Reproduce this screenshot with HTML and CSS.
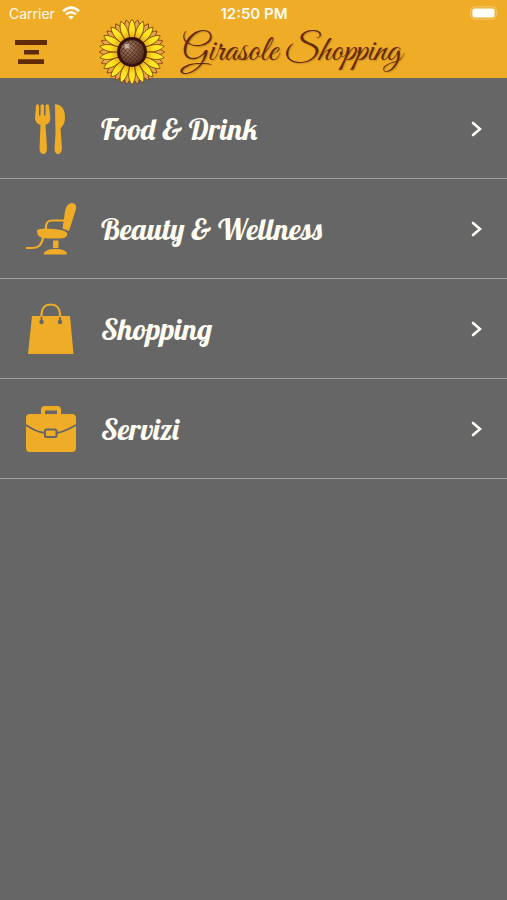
FILE: index.html
```html
<!DOCTYPE html>
<html lang="it">
<head>
    <meta charset="UTF-8">
    <meta name="viewport" content="width=device-width, initial-scale=1.0">
    <title>Girasole Shopping</title>
    <link rel="stylesheet" href="styles.css">
</head>
<body>
    <header class="header">
        <div class="status-bar">
            <div class="carrier">
                <span>Carrier</span>
                <svg class="wifi" viewBox="0 0 18 14" aria-hidden="true">
                    <path d="M1 5.2Q9-2 17 5.2" stroke-width="2.6"/>
                    <path d="M4 8.4Q9 4 14 8.4" stroke-width="2.5"/>
                    <path class="wifi-dot" d="M6.2 10.7Q9 8.6 11.8 10.7L9 13.6Z"/>
                </svg>
            </div>
            <span class="time">12:50 PM</span>
            <svg class="battery" viewBox="0 0 29 14" aria-hidden="true">
                <rect class="battery-shell" x="0.7" y="0.8" width="25.6" height="12.4" rx="3.8"/>
                <rect x="2.4" y="2.6" width="22.2" height="8.8" rx="2"/>
                <path class="battery-tip" d="M27.5 5Q29 7 27.5 9Z"/>
            </svg>
        </div>
        <nav class="navbar">
            <button class="menu-button" type="button" aria-label="Menu">
                <svg viewBox="0 0 32 24" aria-hidden="true">
                    <path d="M0 0h32v5H0zM9 10h15v4.5H9zM3 19.3h26V24H3z"/>
                </svg>
            </button>
            <a class="brand" href="#">
                <svg class="sunflower" viewBox="-32 -32 64 64" aria-hidden="true">
                    <defs>
                        <linearGradient id="petalFill" x1="0" y1="0" x2="0" y2="1">
                            <stop offset="0" stop-color="#fff22c"/>
                            <stop offset="0.55" stop-color="#fbe01f"/>
                            <stop offset="1" stop-color="#e39b10"/>
                        </linearGradient>
                        <radialGradient id="seedFill" cx="0.35" cy="0.3" r="0.75">
                            <stop offset="0" stop-color="#b08a74"/>
                            <stop offset="0.4" stop-color="#8a604a"/>
                            <stop offset="1" stop-color="#5f3626"/>
                        </radialGradient>
                        <pattern id="seeds" width="3" height="3" patternUnits="userSpaceOnUse" patternTransform="rotate(40)">
                            <path d="M0 0H3M0 0V3" stroke="#3a180d" stroke-width="0.8"/>
                        </pattern>
                        <path id="petal" d="M0-31.600C-3.800-27-4.200-20-1.800-12h3.600C4.200-20 3.800-27 0-31.600Z"/>
                        <g id="petals">
                            <use href="#petal"/>
                            <use href="#petal" transform="rotate(20)"/>
                            <use href="#petal" transform="rotate(40)"/>
                            <use href="#petal" transform="rotate(60)"/>
                            <use href="#petal" transform="rotate(80)"/>
                            <use href="#petal" transform="rotate(100)"/>
                            <use href="#petal" transform="rotate(120)"/>
                            <use href="#petal" transform="rotate(140)"/>
                            <use href="#petal" transform="rotate(160)"/>
                        </g>
                    </defs>
                    <g fill="#efa34a" stroke="#7a3f10" stroke-width="0.8">
                        <use href="#petals" transform="rotate(10)"/>
                        <use href="#petals" transform="rotate(190)"/>
                    </g>
                    <g fill="url(#petalFill)" stroke="#7a4508" stroke-width="0.8">
                        <use href="#petals"/>
                        <use href="#petals" transform="rotate(180)"/>
                    </g>
                    <circle r="14.5" fill="#35120b"/>
                    <circle r="11.5" fill="url(#seedFill)"/>
                    <circle r="11.5" fill="url(#seeds)"/>
                    <circle cx="-5" cy="-5.5" r="2.4" fill="#d8c6be" opacity="0.75"/>
                </svg>
                <span class="brand-name">Girasole Shopping</span>
            </a>
        </nav>
    </header>

    <main>
        <ul class="categories">
            <li>
                <a class="category" href="#">
                    <svg class="category-icon" viewBox="0 0 52 52" aria-hidden="true">
                        <path d="M11 2.500Q12.500 0 14 2.500V12.500H15.500V2.500Q17.300 0 19 2.500V12.500H20.500V2.500Q22.300 0 24 2.500L25.400 15Q25.600 20 20.500 22L22 45Q21.800 51 18.300 51T14.500 45L15.500 22Q10 20 10 15Z"/>
                        <path d="M30 1Q40 2 40 15Q40 21 35.500 25.500L37 45Q36.500 51 33 51T29.500 45L30.500 31Z"/>
                    </svg>
                    <span class="category-name">Food &amp; Drink</span>
                    <svg class="chevron" viewBox="0 0 12 16" aria-hidden="true"><path d="M2 2l7 6-7 6"/></svg>
                </a>
            </li>
            <li>
                <a class="category" href="#">
                    <svg class="category-icon" viewBox="0 0 52 52" aria-hidden="true">
                        <path d="M37.500 25.500L40 8Q42 0 47 0Q52 .5 51 6L44 28Z"/>
                        <path d="M12 27Q15 24.500 29 26Q42 27 42.500 31Q42 35.500 34 35.500H23Q12 35 12 29Z"/>
                        <path d="M28 37.500h5.500V45H28zM18.500 51.500Q19 46 30.500 46T42 51.500Z"/>
                        <path class="outline" d="M21 27V24Q21 17.500 27 17.500H39M18 34Q17 45 7 45H1"/>
                    </svg>
                    <span class="category-name">Beauty &amp; Wellness</span>
                    <svg class="chevron" viewBox="0 0 12 16" aria-hidden="true"><path d="M2 2l7 6-7 6"/></svg>
                </a>
            </li>
            <li>
                <a class="category" href="#">
                    <svg class="category-icon" viewBox="0 0 52 52" aria-hidden="true">
                        <path d="M7 13H45L48.500 51H3Z"/>
                        <circle class="cutout" cx="16.500" cy="19" r="2.200"/>
                        <circle class="cutout" cx="35" cy="19" r="2.200"/>
                        <path class="cut-line" d="M16.500 19V13M35 19V13"/>
                        <path class="outline" d="M16.500 14V11Q17 1.500 25.750 1.500T35 11V14"/>
                    </svg>
                    <span class="category-name">Shopping</span>
                    <svg class="chevron" viewBox="0 0 12 16" aria-hidden="true"><path d="M2 2l7 6-7 6"/></svg>
                </a>
            </li>
            <li>
                <a class="category" href="#">
                    <svg class="category-icon" viewBox="0 0 52 52" aria-hidden="true">
                        <path fill-rule="evenodd" d="M16 11V7Q16 3 20 3H32Q36 3 36 7V11H47Q51 11 51 15V45Q51 49 47 49H5Q1 49 1 45V15Q1 11 5 11ZM20 11H32V7.500H20Z"/>
                        <path class="cut-line" d="M1 22Q11 29 20 30H32Q41 28 51 22"/>
                        <rect class="clasp" x="20" y="26.500" width="11.500" height="7.500" rx="1.500"/>
                    </svg>
                    <span class="category-name">Servizi</span>
                    <svg class="chevron" viewBox="0 0 12 16" aria-hidden="true"><path d="M2 2l7 6-7 6"/></svg>
                </a>
            </li>
        </ul>
    </main>
</body>
</html>
```
FILE: styles.css
```css
* {
    box-sizing: border-box;
}

body {
    margin: 0;
    min-height: 100vh;
    background-color: #666666;
    font-family: Inter, "Liberation Sans", sans-serif;
}

a {
    color: inherit;
    text-decoration: none;
}

svg {
    display: block;
    flex-shrink: 0;
}

.header {
    position: relative;
    z-index: 1;
    background-color: #eeac27;
}

.status-bar {
    display: grid;
    grid-template-columns: 1fr auto 1fr;
    align-items: center;
    height: 26px;
    padding: 0 8px 0 9px;
    color: #fffaf0;
    font-size: 14px;
}

.carrier {
    display: flex;
    align-items: center;
    gap: 7px;
}

.wifi {
    width: 18px;
    height: 14px;
    fill: none;
    stroke: #fffdf8;
}

.wifi .wifi-dot {
    fill: #fffdf8;
    stroke: none;
}

.time {
    font-size: 15px;
    font-weight: 600;
}

.battery {
    justify-self: end;
    width: 29px;
    height: 14px;
    fill: #ffffff;
}

.battery-shell {
    fill: none;
    stroke: #f3c878;
}

.battery-tip {
    fill: #f3c878;
}

.navbar {
    display: flex;
    align-items: center;
    gap: 52px;
    height: 52px;
    padding: 0 15px;
}

.menu-button {
    padding: 0;
    border: none;
    background: none;
    cursor: pointer;
}

.menu-button svg {
    width: 32px;
    height: 24px;
    fill: #5f2b08;
}

.brand {
    display: flex;
    align-items: center;
    gap: 17px;
}

.sunflower {
    width: 66px;
    height: 66px;
}

.brand-name {
    color: #642a08;
    font-family: "Great Vibes", "Liberation Serif", serif;
    font-size: 37px;
    line-height: 40px;
    white-space: nowrap;
    text-shadow: 1px 1px 1px rgba(100, 42, 8, 0.25);
}

.categories {
    margin: 0;
    padding: 1px 0 0;
    list-style: none;
}

.category {
    display: flex;
    align-items: center;
    height: 100px;
    padding: 0 24px 0 25px;
    border-bottom: 1px solid #a0a0a0;
}

.category-icon {
    width: 52px;
    height: 52px;
    fill: #eeac27;
}

.category-icon .outline {
    fill: none;
    stroke: #eeac27;
    stroke-width: 2.2;
}

.category-icon .cutout {
    fill: #666666;
}

.category-icon .cut-line {
    fill: none;
    stroke: #666666;
    stroke-width: 1.8;
}

.category-icon .clasp {
    stroke: #666666;
    stroke-width: 2;
}

.category-name {
    flex: 1;
    margin-left: 24px;
    color: #fffdf2;
    font-family: Lobster, "Liberation Serif", serif;
    font-size: 30px;
    line-height: 36px;
}

.chevron {
    width: 12px;
    height: 16px;
    fill: none;
    stroke: #fffdf2;
    stroke-width: 2.6;
    stroke-linecap: round;
}
```
